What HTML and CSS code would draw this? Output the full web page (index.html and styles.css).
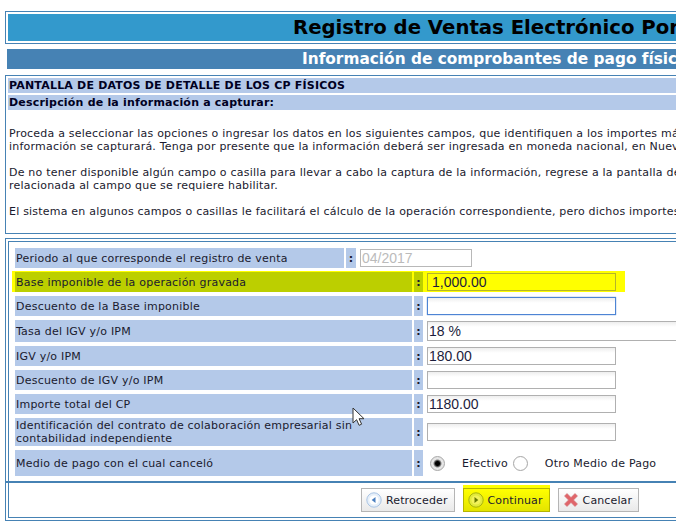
FILE: index.html
```html
<!DOCTYPE html>
<html lang="es">
<head>
    <meta charset="UTF-8">
    <title>Registro de Ventas Electrónico</title>
    <link rel="stylesheet" href="styles.css">
</head>
<body>
    <div class="page">
        <div class="title-box">
            <h1>Registro de Ventas Electrónico Por Internet</h1>
        </div>
        <h2 class="subtitle">Información de comprobantes de pago físicos</h2>

        <div class="panel info">
            <div class="band">PANTALLA DE DATOS DE DETALLE DE LOS CP FÍSICOS</div>
            <div class="band">Descripción de la información a capturar:</div>
            <p>Proceda a seleccionar las opciones o ingresar los datos en los siguientes campos, que identifiquen a los importes más<br>información se capturará. Tenga por presente que la información deberá ser ingresada en moneda nacional, en Nuevos Soles.</p>
            <p>De no tener disponible algún campo o casilla para llevar a cabo la captura de la información, regrese a la pantalla de<br>relacionada al campo que se requiere habilitar.</p>
            <p>El sistema en algunos campos o casillas le facilitará el cálculo de la operación correspondiente, pero dichos importes podrán</p>
        </div>

        <div class="panel outer">
            <div class="inner">
                <div class="form-head">
                    <div class="label">Periodo al que corresponde el registro de venta</div>
                    <div class="colon">:</div>
                    <input class="field period" type="text" value="04/2017" disabled>
                </div>
                <div class="form-grid">
                    <div class="row-hl">
                        <div class="label">Base imponible de la operación gravada</div>
                        <div class="colon">:</div>
                        <div class="cell"><input class="field amount" type="text" value="1,000.00"></div>
                    </div>

                    <div class="label">Descuento de la Base imponible</div>
                    <div class="colon">:</div>
                    <div class="cell"><input class="field focus" type="text"></div>

                    <div class="label tall">Tasa del IGV y/o IPM</div>
                    <div class="colon">:</div>
                    <div class="cell"><input class="field wide" type="text" value="18 %"></div>

                    <div class="label">IGV y/o IPM</div>
                    <div class="colon">:</div>
                    <div class="cell"><input class="field" type="text" value="180.00"></div>

                    <div class="label">Descuento de IGV y/o IPM</div>
                    <div class="colon">:</div>
                    <div class="cell"><input class="field" type="text"></div>

                    <div class="label">Importe total del CP</div>
                    <div class="colon">:</div>
                    <div class="cell"><input class="field" type="text" value="1180.00"></div>

                    <div class="label two-line">Identificación del contrato de colaboración empresarial sin contabilidad independiente</div>
                    <div class="colon">:</div>
                    <div class="cell"><input class="field" type="text"></div>

                    <div class="label pay">Medio de pago con el cual canceló</div>
                    <div class="colon">:</div>
                    <div class="cell radios">
                        <span class="radio on"></span>
                        <span class="radio-text first">Efectivo</span>
                        <span class="radio"></span>
                        <span class="radio-text">Otro Medio de Pago</span>
                    </div>
                </div>
                <div class="actions">
                    <button class="btn" type="button">
                        <svg viewBox="0 0 16 16" width="16" height="16"><circle cx="8" cy="8" r="7.2" fill="#e6eff9" stroke="#a9c4e4"/><circle cx="8" cy="8" r="4.6" fill="#fff"/><path d="M9.5 5v6L5.7 8z" fill="#4a7fc0"/></svg>
                        Retroceder
                    </button>
                    <button class="btn active" type="button">
                        <svg viewBox="0 0 16 16" width="16" height="16"><circle cx="8" cy="8" r="7.2" fill="#e2ea3a" stroke="#a9b40a"/><circle cx="8" cy="8" r="4.6" fill="#f2f25a"/><path d="M6.5 5v6L10.3 8z" fill="#6b7a00"/></svg>
                        Continuar
                    </button>
                    <button class="btn" type="button">
                        <svg viewBox="0 0 16 16" width="16" height="16"><path d="M1.5 4 4 1.5 8 5.5l4-4L14.5 4l-4 4 4 4-2.5 2.5-4-4-4 4L1.5 12l4-4z" fill="#e0656a" stroke="#d0757a" stroke-width=".6"/></svg>
                        Cancelar
                    </button>
                </div>
            </div>
        </div>

        <svg class="cursor" viewBox="0 0 13 20" width="13" height="20"><path d="M1 1v15l3.6-3.3 2.5 5.6 2.5-1.1-2.5-5.5H12z" fill="#fff" stroke="#333" stroke-width="1"/></svg>
    </div>
</body>
</html>
```

FILE: styles.css
```css
* {
    box-sizing: border-box;
}

html, body {
    margin: 0;
    background: #fff;
}

body {
    font-family: "DejaVu Sans", Verdana, sans-serif;
    font-size: 11px;
    color: #1a1a2e;
}

.page {
    position: relative;
    width: 676px;
    height: 523px;
    overflow: hidden;
    padding-top: 11px;
}

.title-box {
    width: 900px;
    height: 33px;
    margin-left: 5px;
    padding: 2px;
    border: 1px solid #4682b4;
}

.title-box h1 {
    margin: 0;
    height: 27px;
    padding-left: 285px;
    background: #3399cc;
    color: #000;
    font-size: 19.7px;
    line-height: 27px;
    white-space: nowrap;
}

.subtitle {
    width: 900px;
    height: 20px;
    margin: 5px 0 0 7px;
    padding-left: 295px;
    background: #4682b4;
    color: #fff;
    font-size: 15.35px;
    line-height: 20px;
    white-space: nowrap;
}

.panel {
    width: 900px;
    margin-left: 5px;
    border: 1px solid #4682b4;
}

.info {
    height: 159px;
    margin-top: 6px;
    padding: 2px;
}

.band {
    height: 15px;
    margin-bottom: 2px;
    padding-left: 1px;
    background: #b4c9e9;
    color: #000022;
    font-weight: bold;
    font-size: 11px;
    line-height: 15px;
    letter-spacing: .2px;
    white-space: nowrap;
}

.info p {
    margin: 13px 0 0 1px;
    line-height: 13px;
    letter-spacing: .21px;
    white-space: nowrap;
}

.info .band + p {
    margin-top: 17px;
}

.outer {
    height: 283px;
    margin-top: 4px;
    padding: 2px;
}

.inner {
    height: 277px;
    padding: 6px 0 0 6px;
    border: 1px solid #4682b4;
}

.form-head {
    display: flex;
    gap: 2px;
    height: 20px;
    margin-bottom: 4px;
}

.form-head .label {
    width: 329px;
}

.form-head .colon {
    width: 10px;
}

.form-head .period {
    margin: 1px 0 0 2px;
    width: 112px;
    height: 18px;
}

.form-grid {
    display: grid;
    grid-template-columns: 397px 9px 1fr;
    column-gap: 2px;
    row-gap: 4px;
}

.label {
    display: flex;
    align-items: center;
    min-height: 20px;
    padding: 0 1px;
    background: #b4c9e9;
    font-size: 11px;
    line-height: 13px;
    letter-spacing: .02em;
}

.two-line {
    height: 28px;
}

.tall {
    height: 22px;
}

.pay {
    height: 26px;
}

.colon {
    display: flex;
    align-items: center;
    justify-content: center;
    background: #b4c9e9;
    font-weight: bold;
    font-size: 11px;
}

.cell {
    display: flex;
    align-items: center;
    padding-left: 2px;
}

.field {
    width: 189px;
    height: 18px;
    padding: 0 1px;
    border: 1px solid #b0b0b0;
    border-radius: 0;
    outline: none;
    background: linear-gradient(#eee, #fff 5px);
    font-family: "Liberation Sans", Arial, sans-serif;
    font-size: 14px;
    color: #1c1c3c;
}

.field:disabled {
    background: #fff;
    color: #bbb;
    border-color: #b8b8b8;
}

.wide {
    width: 400px;
    height: 20px;
}

.focus {
    border-color: #4d84d4;
    box-shadow: 0 0 1px #4d84d4;
}

.row-hl {
    display: grid;
    grid-column: 1 / -1;
    grid-template-columns: 397px 9px 200px;
    column-gap: 2px;
    width: 613px;
    margin: -1px 0 0 -3px;
    padding: 1px 0 0 3px;
    background: #ffff00;
}

.row-hl .label,
.row-hl .colon {
    background: #bccf00;
}

.row-hl .cell {
    padding-left: 2px;
}

.amount {
    padding-left: 4px;
    border-color: #b5b52a;
    background: #ffff00;
}

.radios {
    padding-left: 5px;
}

.radio {
    flex: none;
    width: 15px;
    height: 15px;
    border: 1px solid #a8a8a8;
    border-radius: 50%;
    background: radial-gradient(circle, #fff 60%, #e4e4e4);
}

.radio.on {
    background: radial-gradient(circle, #000 0 2px, #555 3px, #e8e8e8 4.5px, #ddd);
}

.radio-text {
    margin-left: 17px;
    letter-spacing: .2px;
}

.radio-text.first {
    margin: 0 5px 0 17px;
}

.actions {
    display: flex;
    gap: 8px;
    align-items: flex-end;
    height: 35px;
    margin: 5px 0 0 -10px;
    padding: 0 0 4px 356px;
    border-top: 2px solid #4682b4;
    width: 900px;
}

.btn {
    display: flex;
    align-items: center;
    gap: 4px;
    height: 24px;
    padding: 0 6px 0 4px;
    border: 1px solid #b5b5b5;
    background: linear-gradient(#fff, #e9e9e9);
    font-family: "DejaVu Sans", Verdana, sans-serif;
    font-size: 11px;
    letter-spacing: .12px;
    color: #1a1a2e;
}

.active {
    box-shadow: 0 -3px 0 #ffff00;
    background: linear-gradient(#ffff00, #e4e400);
    border-color: #b5b500;
}

.cursor {
    position: absolute;
    left: 352px;
    top: 407px;
}
```
